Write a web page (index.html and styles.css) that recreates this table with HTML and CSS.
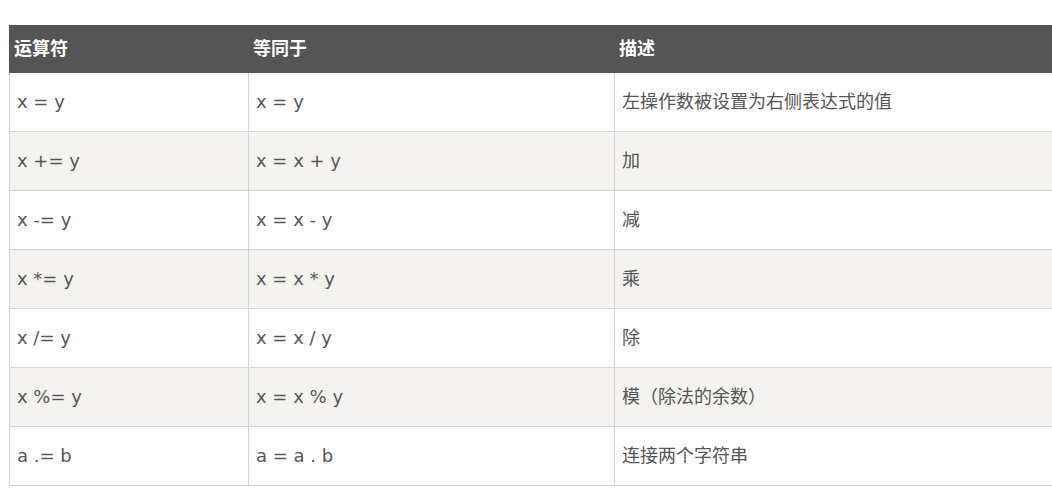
FILE: index.html
```html
<!DOCTYPE html>
<html lang="zh-CN">
<head>
<meta charset="utf-8">
<title>赋值运算符</title>
<link rel="stylesheet" href="styles.css">
</head>
<body>
<div class="wrap">
<table class="reference">
<colgroup>
<col class="c1">
<col class="c2">
<col class="c3">
</colgroup>
<thead>
<tr><th>运算符</th><th>等同于</th><th>描述</th></tr>
</thead>
<tbody>
<tr><td>x = y</td><td>x = y</td><td>左操作数被设置为右侧表达式的值</td></tr>
<tr class="alt"><td>x += y</td><td>x = x + y</td><td>加</td></tr>
<tr><td>x -= y</td><td>x = x - y</td><td>减</td></tr>
<tr class="alt"><td>x *= y</td><td>x = x * y</td><td>乘</td></tr>
<tr><td>x /= y</td><td>x = x / y</td><td>除</td></tr>
<tr class="alt"><td>x %= y</td><td>x = x % y</td><td>模（除法的余数）</td></tr>
<tr><td>a .= b</td><td>a = a . b</td><td>连接两个字符串</td></tr>
</tbody>
</table>
</div>
</body>
</html>
```
FILE: styles.css
```css
html, body {
  margin: 0;
  padding: 0;
  background: #fff;
  overflow: hidden;
}
.wrap {
  padding: 25px 0 0 9px;
}
.reference {
  border-collapse: collapse;
  width: 1043px;
  table-layout: fixed;
  font-family: "DejaVu Sans", "Noto Sans CJK SC", sans-serif;
  font-size: 18px;
  color: #555;
}
.c1 { width: 239px; }
.c2 { width: 366px; }
.reference th {
  background: #555;
  color: #fff;
  font-weight: bold;
  text-align: left;
  line-height: 36px;
  padding: 5px 4px;
  border: 1px solid #555;
  border-right: 0;
}
.reference td {
  line-height: 36px;
  padding: 11px 7px;
  border: 1px solid #d4d4d4;
  vertical-align: top;
}
.reference td:last-child {
  border-right: 0;
}
.reference tr.alt td {
  background: #f4f3f0;
}
```
